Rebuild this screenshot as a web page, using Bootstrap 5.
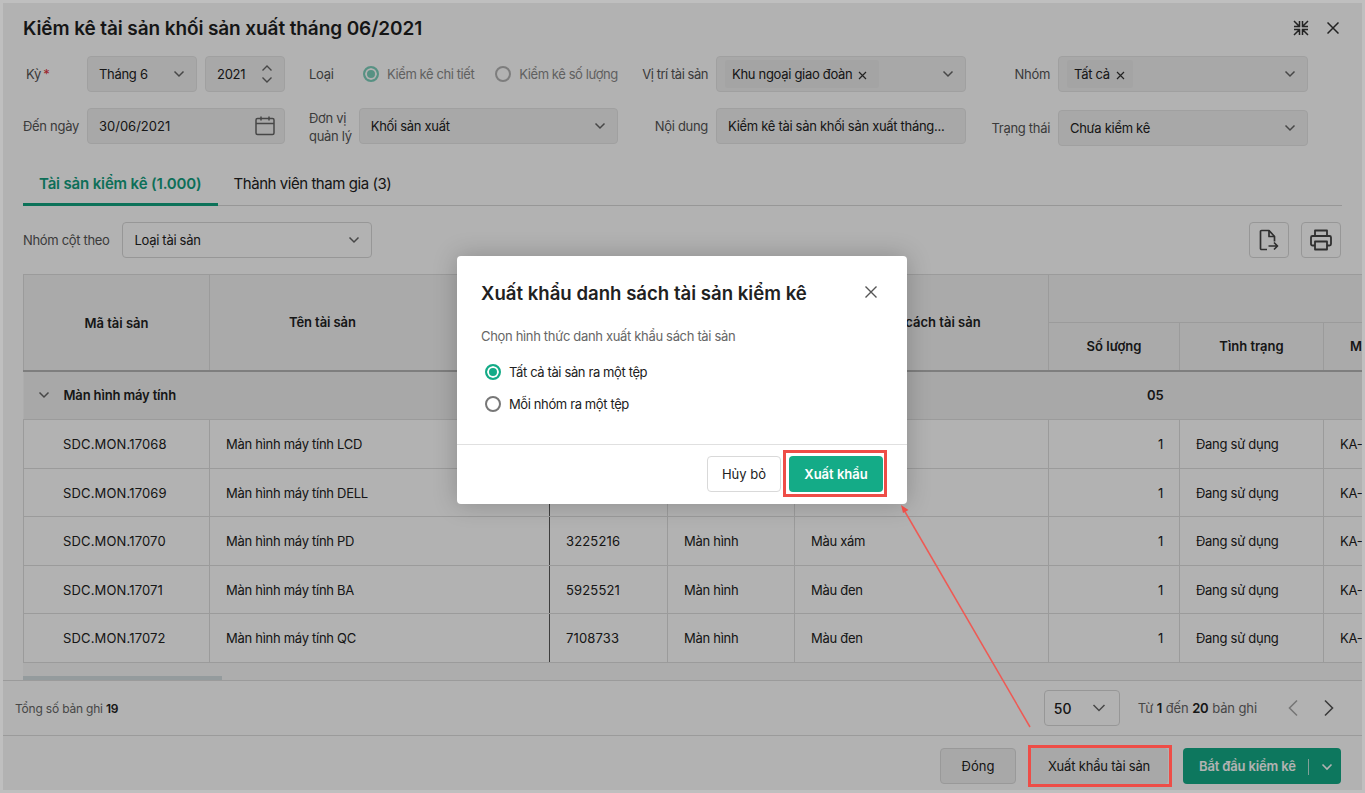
<!DOCTYPE html>
<html lang="vi">
<head>
<meta charset="utf-8">
<title>Kiểm kê tài sản</title>
<link href="https://cdn.jsdelivr.net/npm/bootstrap@5.3.0/dist/css/bootstrap.min.css" rel="stylesheet">
<style>
html,body{margin:0;height:793px;overflow:hidden;}
body{font-family:Inter,"Liberation Sans",sans-serif;font-size:13px;color:#212121;background:#bfbfbf;position:relative;}
.shell{position:absolute;inset:3px;background:#fff;display:flex;flex-direction:column;overflow:hidden;}
.scrim{position:absolute;inset:0;background:rgba(0,0,0,.3);z-index:5;}
.head-bar{height:50px;padding:0 23px 0 20px;flex:none;}
.head-title{font-size:19px;font-weight:600;margin:2px 0 0;color:#1f1f1f;letter-spacing:-.1px;}
.head-tools{gap:18px;}
.filter-zone{padding:3px 20px 0;height:109px;flex:none;}
.filter-line{display:flex;height:36px;margin-bottom:16px;}
.fg-a{width:262px;margin-right:24px;display:flex;align-items:center;}
.fg-b{width:309px;display:flex;align-items:center;}
.fg-c{width:348px;display:flex;align-items:center;justify-content:flex-end;}
.fg-d{width:342px;display:flex;align-items:center;justify-content:flex-end;}
.lab{color:#555;white-space:nowrap;letter-spacing:-.3px;padding-top:2px;}
.lab-c{margin-right:8px;}
.lab-a{width:64px;flex:none;}
.lab-ky{padding-left:3px;}
.lab-pos{letter-spacing:-.46px;}
.lab-mgr{line-height:18px;margin-right:7px;}
.kind-lab{width:54px;flex:none;}
.req{color:#e0313b;margin-left:-1px;}
.fld{height:36px;border-radius:4px;font-size:13px;padding:0 11px;color:#212121;background-color:#f1f1f1;border:1px solid #e6e6e6;display:flex;align-items:center;position:relative;letter-spacing:-.3px;white-space:nowrap;}
.fld>span:not(.tagchip){padding-top:2px;}
.fld-sel{justify-content:space-between;}
.fld svg{flex:none;}
.w-mo{width:110px;margin-right:8px;}
.w-yr{width:80px;}
.w-date{width:198px;padding-right:9px;letter-spacing:0;}
.w-mgr{flex:1;}
.w-250{width:250px;}
.shift-2{position:relative;top:2px;}
.tagchip{background:#ebebeb;border-radius:2px;height:28px;margin-left:-3px;padding:2px 12px 0 7px;display:flex;align-items:center;gap:6px;white-space:nowrap;}
.tagchip-s{padding-right:8px;}
.opt{display:flex;align-items:center;gap:8px;white-space:nowrap;letter-spacing:-.42px;padding-top:2px;}
.opt-next{margin-left:21px;}
.form-check-input.rad{width:16px;height:16px;margin:-2px 0 0;flex:none;background-image:none!important;border:2px solid #777;background-color:#fff;opacity:1;}
.form-check-input.rad:checked{border-color:#14ab87;background-color:#14ab87;box-shadow:inset 0 0 0 2px #fff;}
.rad-off{opacity:.55!important;}
.faded{color:#8a8a8a;}
.tabs-zone{padding:0 20px;flex:none;}
.nav-tabs.asset-tabs{border-bottom:1px solid #d9d9d9;height:44px;--bs-nav-tabs-border-width:0;}
.asset-tabs .nav-link{border:0;border-bottom:3px solid transparent;color:#212121;font-size:15px;padding:0 16px;height:44px;line-height:44px;border-radius:0;margin:0;letter-spacing:-.45px;background:none;}
.asset-tabs .nav-link.active{color:#13a07f;font-weight:600;border-bottom-color:#12a480;background:none;letter-spacing:-.15px;}
.group-bar{padding:16px 21px 0 20px;height:68px;display:flex;align-items:flex-start;flex:none;}
.group-lab{margin-right:13px;letter-spacing:-.33px;}
.fld-white{background:#fff;border:1px solid #d9d9d9;}
.tool-set{gap:12px;}
.icon-btn{width:40px;height:36px;background:#fff;border:1px solid #d9d9d9;border-radius:4px;padding:0;display:flex;align-items:center;justify-content:center;}
.tbl-wrap{margin-left:20px;flex:none;height:406px;overflow:hidden;position:relative;background:#f8f8f8;}
.tbl{table-layout:fixed;border-collapse:collapse;width:1450px;margin:0;}
.tbl th,.tbl td{border:1px solid #dedede;font-size:13px;padding:0 16px;white-space:nowrap;overflow:hidden;vertical-align:middle;color:#212121;}
.tbl td{background:#fff;height:48.5px;letter-spacing:-.28px;padding-top:2px;}
.tbl td.codey{letter-spacing:.15px;}
.tbl th{background:#f4f4f4;font-weight:600;height:48px;text-align:center;}
.tbl thead tr:last-child th,.tbl th.bottom{border-bottom:2px solid #b5b5b5;}
.tbl th.first-col{padding-top:2px;}
.tbl th.left-at{text-align:left;padding-left:79px;letter-spacing:-.1px;}
.tbl th.nudge{padding-left:30px;}
.tbl th.cut-lab{text-align:left;padding-left:26px;}
.tbl td:first-child{padding-left:39px;}
.tbl tr.grp td{background:#f1f1f1;font-weight:600;border-left:0;border-right:0;height:49px;letter-spacing:-.15px;padding-top:0;}
.tbl tr.grp td:first-child{padding-left:40px;}
.tbl td.num{text-align:right;}
.tbl tbody tr:not(.grp) td:nth-child(2){border-right:1px solid #5a5a5a;}
.chev-grp{position:absolute;left:14px;top:50%;transform:translateY(-50%);}
.scroll-thumb{position:absolute;left:0;bottom:0;width:199px;height:4px;background:#d5dee1;}
.pager{height:56px;border-top:1px solid #dedede;border-bottom:1px solid #dedede;padding:0 27px 0 12px;flex:none;}
.pager b{font-weight:600;color:#212121;}
.pager-txt{color:#666;letter-spacing:-.1px;padding-top:2px;}
.pager-sum{font-size:12px;letter-spacing:-.2px;}
.pg-size{width:76px;height:36px;border:1px solid #d9d9d9;border-radius:4px;padding:0 13px 0 9px;font-size:14px;font-weight:500;}
.pg-range{margin:0 30px 0 18px;}
.pg-prev{margin-right:24px;}
.foot-bar{flex:1;padding:6px 21px 0 0;gap:14px;}
.btn-foot{height:36px;font-size:13px;border-radius:4px;padding:2px 0 0;display:flex;align-items:center;justify-content:center;}
.btn-shut{width:76px;background:#f1f1f1;border:1px solid #dcdcdc;color:#212121;}
.btn-xport{width:138px;background:#f1f1f1;border:0;color:#212121;margin-right:1px;letter-spacing:-.2px;}
.btn-begin{width:158px;background:#14ab87;border:0;color:#fff;font-weight:600;gap:12px;justify-content:flex-start;padding-left:16px;letter-spacing:-.15px;}
.btn-begin i{display:block;width:1px;height:16px;background:#fff;opacity:.7;}
.export-modal{position:absolute;left:457px;top:256px;width:450px;height:248px;z-index:10;}
.export-modal .modal-content{height:100%;border:0;border-radius:4px;box-shadow:0 0 24px rgba(0,0,0,.22);background:#fff;}
.export-modal .modal-header{border:0;padding:25px 24px 0;height:72px;align-items:flex-start;}
.export-modal .modal-title{font-size:18.6px;font-weight:600;line-height:24px;color:#212121;}
.close-m{margin:5px 6px 0 0;}
.export-modal .modal-body{padding:0 24px;flex:1;}
.m-lead{color:#666;margin:0 0 12px;line-height:16px;letter-spacing:-.33px;}
.m-opt{height:32px;padding:2px 0 0 4px;gap:8px;display:flex;align-items:center;letter-spacing:-.38px;}
.export-modal .modal-footer{border-top:1px solid #e0e0e0;padding:11px 24px 12px;height:60px;gap:8px;}
.export-modal .modal-footer>*{margin:0;}
.btn-cancel{width:74px;background:#fff;border:1px solid #d9d9d9;color:#212121;}
.btn-go{width:94px;background:#14ab87;border:0;color:#fff;font-weight:600;}
.x-mark{border:0;background:none;padding:0;line-height:0;}
.annot{position:absolute;border:3px solid #ee4d47;z-index:12;pointer-events:none;}
.annot-a{left:783px;top:450px;width:104px;height:47px;}
.annot-b{left:1028px;top:745px;width:144px;height:42px;}
.annot-line{position:absolute;left:0;top:0;z-index:12;pointer-events:none;}
</style>
</head>
<body>
<div class="shell">
  <div class="d-flex align-items-center justify-content-between head-bar">
    <h1 class="head-title">Kiểm kê tài sản khối sản xuất tháng 06/2021</h1>
    <div class="d-flex align-items-center head-tools">
      <svg width="16" height="16" viewBox="0 0 16 16" fill="none" stroke="#333" stroke-width="1.500"><path d="M1 6.500h5.500V1M1 1l5 5M15 6.500H9.500V1M15 1l-5 5M1 9.500h5.500V15M1 15l5-5M15 9.500H9.500V15M15 15l-5-5"/></svg>
      <button class="x-mark" type="button" aria-label="Đóng"><svg width="12" height="12" viewBox="0 0 12 12" fill="none" stroke="#333" stroke-width="1.500"><path d="M.5.500l11 11M11.500.500l-11 11"/></svg></button>
    </div>
  </div>
  <div class="filter-zone">
    <div class="filter-line">
      <div class="fg-a">
        <span class="lab lab-a lab-ky">Kỳ <span class="req">*</span></span>
        <div class="fld fld-sel w-mo"><span>Tháng 6</span><svg width="12" height="8" viewBox="0 0 12 8" fill="none" stroke="#666" stroke-width="1.5"><path d="M1.500 1.500L6 6l4.500-4.500"/></svg></div>
        <div class="fld fld-sel w-yr"><span>2021</span><svg width="12" height="20" viewBox="0 0 12 20" fill="none" stroke="#666" stroke-width="1.400"><path d="M1.500 6.500L6 2l4.500 4.500M1.500 13.500L6 18l4.500-4.500"/></svg></div>
      </div>
      <div class="fg-b">
        <span class="lab kind-lab">Loại</span>
        <label class="opt faded"><input class="form-check-input rad rad-off" type="radio" name="kind" checked disabled>Kiểm kê chi tiết</label>
        <label class="opt faded opt-next"><input class="form-check-input rad rad-off" type="radio" name="kind" disabled>Kiểm kê số lượng</label>
      </div>
      <div class="fg-c">
        <span class="lab lab-c lab-pos">Vị trí tài sản</span>
        <div class="fld fld-sel w-250"><span class="tagchip">Khu ngoại giao đoàn <svg width="9" height="9" viewBox="0 0 9 9" fill="none" stroke="#333" stroke-width="1.200"><path d="M1 1l7 7M8 1L1 8"/></svg></span><svg width="12" height="8" viewBox="0 0 12 8" fill="none" stroke="#666" stroke-width="1.500"><path d="M1.500 1.500L6 6l4.500-4.500"/></svg></div>
      </div>
      <div class="fg-d">
        <span class="lab lab-c">Nhóm</span>
        <div class="fld fld-sel w-250"><span class="tagchip tagchip-s">Tất cả <svg width="9" height="9" viewBox="0 0 9 9" fill="none" stroke="#333" stroke-width="1.200"><path d="M1 1l7 7M8 1L1 8"/></svg></span><svg width="12" height="8" viewBox="0 0 12 8" fill="none" stroke="#666" stroke-width="1.500"><path d="M1.500 1.500L6 6l4.500-4.500"/></svg></div>
      </div>
    </div>
    <div class="filter-line">
      <div class="fg-a">
        <span class="lab lab-a">Đến ngày</span>
        <div class="fld fld-sel w-date"><span>30/06/2021</span><svg width="20" height="20" viewBox="0 0 20 20" fill="none" stroke="#666" stroke-width="1.500"><rect x="1" y="2.500" width="18" height="16" rx="1.500"/><path d="M1 7.500h18M6 .500v4M14 .500v4"/></svg></div>
      </div>
      <div class="fg-b">
        <span class="lab lab-mgr">Đơn vị<br>quản lý</span>
        <div class="fld fld-sel w-mgr"><span>Khối sản xuất</span><svg width="12" height="8" viewBox="0 0 12 8" fill="none" stroke="#666" stroke-width="1.500"><path d="M1.500 1.500L6 6l4.500-4.500"/></svg></div>
      </div>
      <div class="fg-c">
        <span class="lab lab-c">Nội dung</span>
        <div class="fld w-250"><span>Kiểm kê tài sản khối sản xuất tháng...</span></div>
      </div>
      <div class="fg-d">
        <span class="lab lab-c shift-2">Trạng thái</span>
        <div class="fld fld-sel w-250 shift-2"><span>Chưa kiểm kê</span><svg width="12" height="8" viewBox="0 0 12 8" fill="none" stroke="#666" stroke-width="1.500"><path d="M1.500 1.500L6 6l4.500-4.500"/></svg></div>
      </div>
    </div>
  </div>
  <div class="tabs-zone">
    <ul class="nav nav-tabs asset-tabs">
      <li class="nav-item"><a class="nav-link active" href="#">Tài sản kiểm kê (1.000)</a></li>
      <li class="nav-item"><a class="nav-link" href="#">Thành viên tham gia (3)</a></li>
    </ul>
  </div>
  <div class="group-bar justify-content-between">
    <div class="d-flex align-items-center">
      <span class="lab group-lab">Nhóm cột theo</span>
      <div class="fld fld-sel fld-white w-250"><span>Loại tài sản</span><svg width="12" height="8" viewBox="0 0 12 8" fill="none" stroke="#666" stroke-width="1.500"><path d="M1.500 1.500L6 6l4.500-4.500"/></svg></div>
    </div>
    <div class="d-flex tool-set">
      <button class="icon-btn" type="button" aria-label="Xuất tệp"><svg width="20" height="22" viewBox="0 0 20 22" fill="none" stroke="#444" stroke-width="1.700" stroke-linejoin="round"><path d="M8 20.500H2.500a1 1 0 0 1-1-1v-17a1 1 0 0 1 1-1h7.500l5.500 6v5"/><path d="M10 1.500v6h5.500"/><path d="M9.500 17h9M15 13.500l3.500 3.500-3.500 3.500"/></svg></button>
      <button class="icon-btn" type="button" aria-label="In"><svg width="22" height="22" viewBox="0 0 22 22" fill="none" stroke="#444" stroke-width="1.800" stroke-linejoin="round"><path d="M5 7V1.500h12V7"/><path d="M5 16.500H2.500a1.500 1.500 0 0 1-1.500-1.500V8.500A1.500 1.500 0 0 1 2.500 7h17A1.500 1.500 0 0 1 21 8.500V15a1.500 1.500 0 0 1-1.500 1.500H17"/><rect x="5" y="12.500" width="12" height="8"/></svg></button>
    </div>
  </div>
  <div class="tbl-wrap">
    <table class="tbl">
      <colgroup><col style="width:186px"><col style="width:340px"><col style="width:118px"><col style="width:127px"><col style="width:254px"><col style="width:131px"><col style="width:144px"><col style="width:150px"></colgroup>
      <thead>
        <tr>
          <th rowspan="2" class="bottom first-col">Mã tài sản</th>
          <th rowspan="2" class="bottom left-at">Tên tài sản</th>
          <th rowspan="2" class="bottom">Số serial</th>
          <th rowspan="2" class="bottom">Loại tài sản</th>
          <th rowspan="2" class="bottom nudge">Quy cách tài sản</th>
          <th colspan="3"></th>
        </tr>
        <tr><th>Số lượng</th><th>Tình trạng</th><th class="cut-lab">Mã kiểm kê tài sản</th></tr>
      </thead>
      <tbody>
        <tr class="grp"><td colspan="5" class="position-relative"><svg class="chev-grp" width="12" height="8" viewBox="0 0 12 8" fill="none" stroke="#666" stroke-width="1.500"><path d="M1.500 1.500L6 6l4.500-4.500"/></svg>Màn hình máy tính</td><td class="num">05</td><td></td><td></td></tr>
        <tr><td class="codey">SDC.MON.17068</td><td>Màn hình máy tính LCD</td><td class="codey">3225214</td><td>Màn hình</td><td>Màu đen</td><td class="num">1</td><td>Đang sử dụng</td><td>KA-2021-001</td></tr>
        <tr><td class="codey">SDC.MON.17069</td><td>Màn hình máy tính DELL</td><td class="codey">3225215</td><td>Màn hình</td><td>Màu đen</td><td class="num">1</td><td>Đang sử dụng</td><td>KA-2021-002</td></tr>
        <tr><td class="codey">SDC.MON.17070</td><td>Màn hình máy tính PD</td><td class="codey">3225216</td><td>Màn hình</td><td>Màu xám</td><td class="num">1</td><td>Đang sử dụng</td><td>KA-2021-003</td></tr>
        <tr><td class="codey">SDC.MON.17071</td><td>Màn hình máy tính BA</td><td class="codey">5925521</td><td>Màn hình</td><td>Màu đen</td><td class="num">1</td><td>Đang sử dụng</td><td>KA-2021-004</td></tr>
        <tr><td class="codey">SDC.MON.17072</td><td>Màn hình máy tính QC</td><td class="codey">7108733</td><td>Màn hình</td><td>Màu đen</td><td class="num">1</td><td>Đang sử dụng</td><td>KA-2021-005</td></tr>
      </tbody>
    </table>
    <div class="scroll-thumb"></div>
  </div>
  <div class="d-flex align-items-center justify-content-between pager">
    <span class="pager-txt pager-sum">Tổng số bản ghi <b>19</b></span>
    <div class="d-flex align-items-center">
      <div class="d-flex align-items-center justify-content-between pg-size"><span>50</span><svg width="14" height="8" viewBox="0 0 14 8" fill="none" stroke="#666" stroke-width="1.500"><path d="M1.500 1L7 6.500 12.500 1"/></svg></div>
      <span class="pager-txt pg-range">Từ <b>1</b> đến <b>20</b> bản ghi</span>
      <svg class="pg-prev" width="12" height="18" viewBox="0 0 12 18" fill="none" stroke="#aaa" stroke-width="1.600"><path d="M10 1.500L2.500 9l7.500 7.500"/></svg>
      <svg width="12" height="18" viewBox="0 0 12 18" fill="none" stroke="#555" stroke-width="1.600"><path d="M2 1.500L9.500 9 2 16.500"/></svg>
    </div>
  </div>
  <div class="d-flex align-items-center justify-content-end foot-bar">
    <button class="btn-foot btn-shut" type="button">Đóng</button>
    <button class="btn-foot btn-xport" type="button">Xuất khẩu tài sản</button>
    <button class="btn-foot btn-begin" type="button">Bắt đầu kiểm kê <i></i><svg width="12" height="8" viewBox="0 0 12 8" fill="none" stroke="#fff" stroke-width="1.600"><path d="M1.500 1.500L6 6l4.500-4.500"/></svg></button>
  </div>
  <div class="scrim"></div>
</div>

<div class="export-modal">
  <div class="modal-content">
    <div class="modal-header justify-content-between">
      <h5 class="modal-title">Xuất khẩu danh sách tài sản kiểm kê</h5>
      <button class="x-mark close-m" type="button" aria-label="Đóng"><svg width="12" height="12" viewBox="0 0 12 12" fill="none" stroke="#555" stroke-width="1.400"><path d="M.5.500l11 11M11.500.500l-11 11"/></svg></button>
    </div>
    <div class="modal-body">
      <p class="m-lead">Chọn hình thức danh xuất khẩu sách tài sản</p>
      <label class="m-opt"><input class="form-check-input rad" type="radio" name="mode" checked>Tất cả tài sản ra một tệp</label>
      <label class="m-opt"><input class="form-check-input rad" type="radio" name="mode">Mỗi nhóm ra một tệp</label>
    </div>
    <div class="modal-footer">
      <button class="btn-foot btn-cancel" type="button">Hủy bỏ</button>
      <button class="btn-foot btn-go" type="button">Xuất khẩu</button>
    </div>
  </div>
</div>

<div class="annot annot-a"></div>
<div class="annot annot-b"></div>
<svg class="annot-line" width="1365" height="793" viewBox="0 0 1365 793" fill="none"><path d="M1030 727L904 510" stroke="#ee5a54" stroke-width="1.500"/><path d="M901 505l7.500 5-5.500 3z" fill="#ee4d47"/></svg>
</body>
</html>
